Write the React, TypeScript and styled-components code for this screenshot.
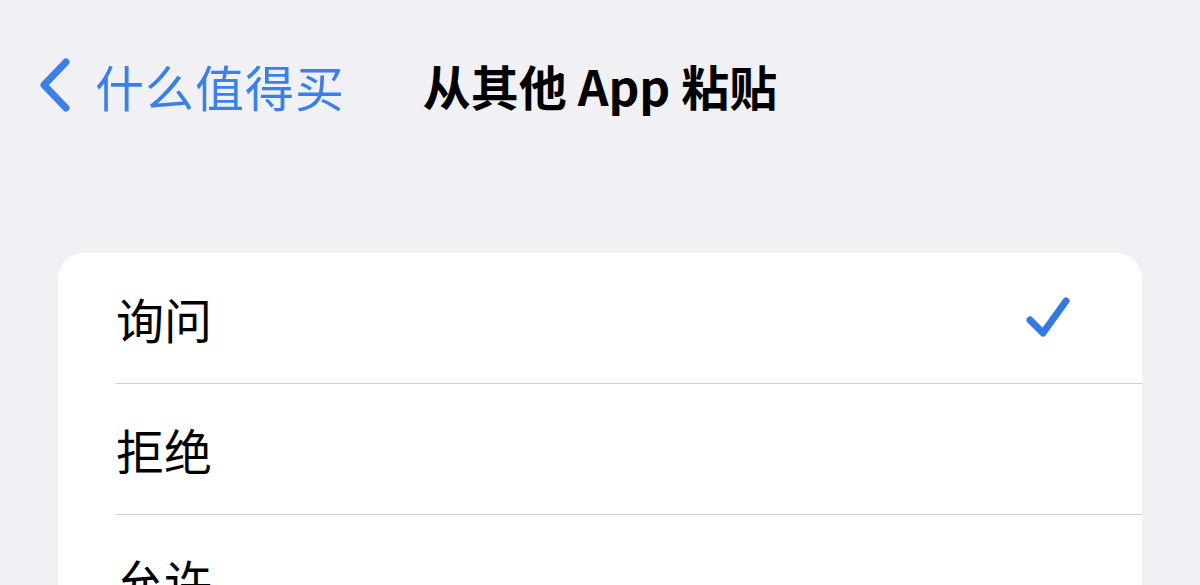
import React from "react"
import styled, { createGlobalStyle } from "styled-components"

const GlobalStyle = createGlobalStyle`
  html, body {
    margin: 0;
    padding: 0;
    background: #f0f0f5;
    font-family: "Noto Sans CJK SC", "Noto Sans", sans-serif;
    -webkit-font-smoothing: antialiased;
  }
`

const Page = styled.div`
  width: 1200px;
  height: 585px;
  overflow: hidden;
  background: #f0f0f5;
`

const NavBar = styled.div`
  display: grid;
  grid-template-columns: 1fr auto 1fr;
  align-items: center;
  height: 96px;
  padding: 37px 0 0;
`

const BackButton = styled.div`
  display: flex;
  align-items: center;
  gap: 23px;
  padding-left: 38px;
  color: #3a80e8;
  font-size: 49px;
  letter-spacing: 1px;
  line-height: 1;
`

const Title = styled.div`
  font-size: 48px;
  font-weight: 700;
  color: #000;
  line-height: 1;
`

const Card = styled.div`
  margin: 120px 58px 0;
  background: #fff;
  border-radius: 26px;
  overflow: hidden;
`

const Row = styled.div`
  padding-left: 58px;
`

const RowInner = styled.div<{ $last?: boolean }>`
  display: flex;
  align-items: center;
  justify-content: space-between;
  height: 130px;
  padding-right: 70px;
  border-bottom: ${(p) => (p.$last ? "none" : "1px solid #cfcfd3")};
`

const Label = styled.span`
  font-size: 48px;
  color: #000;
  line-height: 1;
`

const Chevron = () => (
  <svg width="34" height="54" viewBox="0 0 34 54">
    <path d="M28 4 L6 27 L28 50" fill="none" stroke="#3a80e8" strokeWidth="7" strokeLinecap="round" strokeLinejoin="round" />
  </svg>
)

const Check = () => (
  <svg width="46" height="46" viewBox="0 0 46 46">
    <path d="M4 25 L17 38 L40 6" fill="none" stroke="#3478e6" strokeWidth="7" strokeLinecap="round" strokeLinejoin="round" />
  </svg>
)

const options = [
  { label: "询问", checked: true },
  { label: "拒绝", checked: false },
  { label: "允许", checked: false },
]

export default function App() {
  return (
    <Page>
      <GlobalStyle />
      <NavBar>
        <BackButton>
          <Chevron />
          <span>什么值得买</span>
        </BackButton>
        <Title>从其他 App 粘贴</Title>
        <div />
      </NavBar>
      <Card>
        {options.map((o, i) => (
          <Row key={o.label}>
            <RowInner $last={i === options.length - 1}>
              <Label>{o.label}</Label>
              {o.checked && <Check />}
            </RowInner>
          </Row>
        ))}
      </Card>
    </Page>
  )
}
